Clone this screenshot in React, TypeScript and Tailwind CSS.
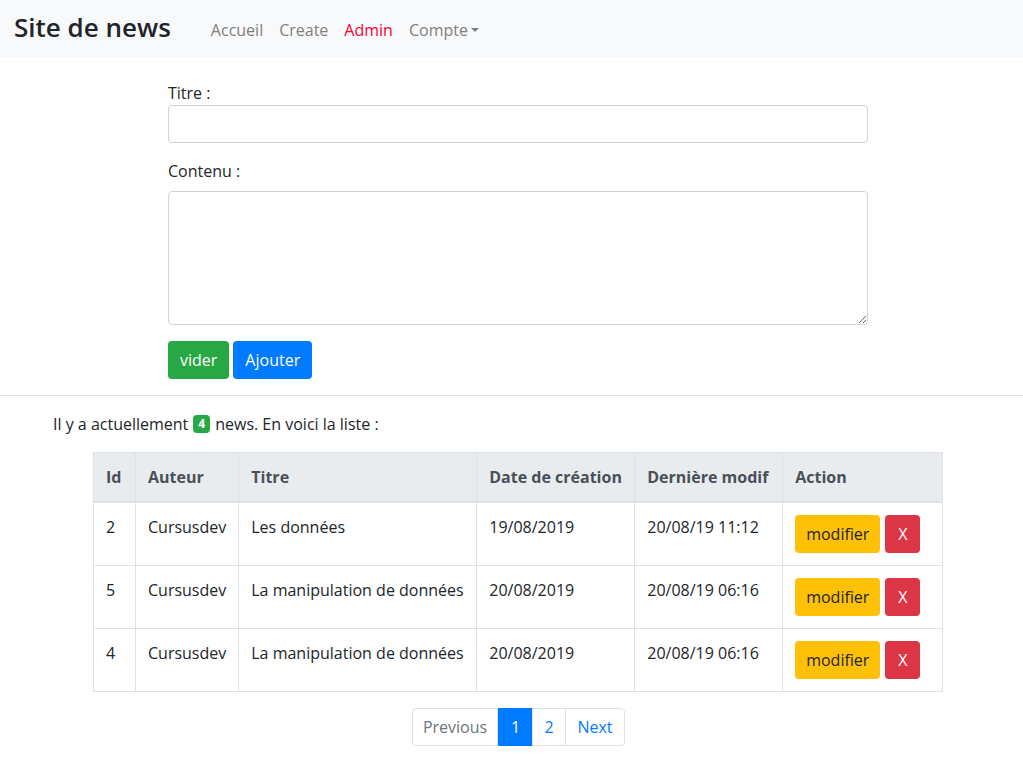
import React from "react";

const rows = [
  { id: "2", auteur: "Cursusdev", titre: "Les données", date: "19/08/2019", modif: "20/08/19 11:12" },
  { id: "5", auteur: "Cursusdev", titre: "La manipulation de données", date: "20/08/2019", modif: "20/08/19 06:16" },
  { id: "4", auteur: "Cursusdev", titre: "La manipulation de données", date: "20/08/2019", modif: "20/08/19 06:16" },
];

export default function App() {
  return (
    <div className="min-h-[784px] bg-white font-['Segoe_UI','Open_Sans','Noto_Sans',sans-serif] text-[16px] leading-[24px] text-[#212529]">
      <nav className="flex h-[57px] items-center bg-[#f8f9fa] px-[14px]">
        <span className="mb-[4px] text-[26px] font-semibold leading-[36px] text-[#212529]">Site de news</span>
        <div className="ml-[32px] mt-[3px] flex items-center">
          <a className="px-[8px] text-[#7f7f7f]">Accueil</a>
          <a className="px-[8px] text-[#7f7f7f]">Create</a>
          <a className="px-[8px] text-[#ff0033]">Admin</a>
          <a className="flex items-center px-[8px] text-[#7f7f7f]">
            Compte
            <span className="ml-[3px] inline-block h-0 w-0 border-x-[4px] border-t-[4px] border-x-transparent border-t-[#7f7f7f]" />
          </a>
        </div>
      </nav>

      <form className="ml-[168px] mt-[24px] w-[700px]">
        <div className="mb-[16px]">
          <label className="block leading-[24px]">Titre :</label>
          <input className="block h-[38px] w-full rounded-[4px] border border-[#ced4da] px-[12px]" />
        </div>
        <div className="mb-[16px]">
          <label className="mb-[8px] block leading-[24px]">Contenu :</label>
          <textarea className="block h-[134px] w-full rounded-[4px] border border-[#ced4da] px-[12px]" />
        </div>
        <div className="flex gap-[4px]">
          <button type="button" className="h-[38px] rounded-[4px] bg-[#28a745] px-[12px] text-white">vider</button>
          <button type="button" className="h-[38px] rounded-[4px] bg-[#007bff] px-[12px] text-white">Ajouter</button>
        </div>
      </form>

      <hr className="mt-[16px] border-t border-[rgba(0,0,0,0.1)]" />

      <div className="px-[53px] pt-[16px]">
        <p className="flex items-center">
          Il y a actuellement
          <span className="mx-[5px] inline-flex h-[18px] items-center rounded-[4px] bg-[#28a745] px-[5px] text-[12px] font-bold leading-none text-white">4</span>
          news. En voici la liste :
        </p>
      </div>

      <div className="ml-[93px] mt-[16px]">
        <table className="w-[850px] border-collapse border border-[#dee2e6] text-left">
          <thead>
            <tr className="bg-[#e9ecef] text-[#495057]">
              <th className="w-[42px] border border-b-2 border-[#dee2e6] p-[12px] font-bold">Id</th>
              <th className="w-[103px] border border-b-2 border-[#dee2e6] p-[12px] font-bold">Auteur</th>
              <th className="w-[238px] border border-b-2 border-[#dee2e6] p-[12px] font-bold">Titre</th>
              <th className="w-[158px] border border-b-2 border-[#dee2e6] p-[12px] font-bold">Date de création</th>
              <th className="w-[148px] border border-b-2 border-[#dee2e6] p-[12px] font-bold">Dernière modif</th>
              <th className="border border-b-2 border-[#dee2e6] p-[12px] font-bold">Action</th>
            </tr>
          </thead>
          <tbody>
            {rows.map((r, i) => (
              <tr key={i}>
                <td className="border border-[#dee2e6] p-[12px] align-top">{r.id}</td>
                <td className="border border-[#dee2e6] p-[12px] align-top">{r.auteur}</td>
                <td className="border border-[#dee2e6] p-[12px] align-top">{r.titre}</td>
                <td className="border border-[#dee2e6] p-[12px] align-top">{r.date}</td>
                <td className="border border-[#dee2e6] p-[12px] align-top">{r.modif}</td>
                <td className="border border-[#dee2e6] p-[12px] align-top">
                  <div className="flex gap-[5px]">
                    <button type="button" className="h-[38px] w-[85px] rounded-[4px] bg-[#ffc107] text-[#212529]">modifier</button>
                    <button type="button" className="h-[38px] w-[35px] rounded-[4px] bg-[#dc3545] text-white">X</button>
                  </div>
                </td>
              </tr>
            ))}
          </tbody>
        </table>
      </div>

      <div className="ml-[412px] mt-[16px] flex">
        <ul className="flex">
          <li className="flex h-[38px] w-[86px] items-center justify-center rounded-l-[4px] border border-[#dee2e6] text-[#6c757d]">Previous</li>
          <li className="flex h-[38px] w-[35px] items-center justify-center border border-[#007bff] bg-[#007bff] text-white">1</li>
          <li className="-ml-px flex h-[38px] w-[34px] items-center justify-center border border-[#dee2e6] text-[#007bff]">2</li>
          <li className="-ml-px flex h-[38px] w-[60px] items-center justify-center rounded-r-[4px] border border-[#dee2e6] text-[#007bff]">Next</li>
        </ul>
      </div>
    </div>
  );
}
